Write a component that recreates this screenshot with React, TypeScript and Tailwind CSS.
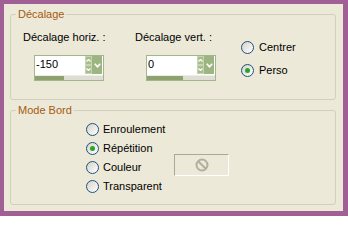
import type { ReactNode } from 'react'

function Group({ title, className, children }: { title: string; className: string; children: ReactNode }) {
  return (
    <div className={`relative w-[326px] border border-[#D0D0BF] rounded-[3px] ${className}`}>
      <span className="absolute left-[5px] -top-[7px] px-[2px] bg-[#ECE9D8] text-[#A65A10]">{title}</span>
      {children}
    </div>
  )
}

function Radio({ checked, label, gap }: { checked?: boolean; label: string; gap: string }) {
  return (
    <div className="flex items-center h-[13px]">
      <span className="w-[13px] h-[13px] rounded-full border border-[#1C5180] bg-gradient-to-br from-[#D6D3C6] to-white flex items-center justify-center shrink-0">
        {checked && <span className="w-[5px] h-[5px] rounded-full bg-[#2BA52B]" />}
      </span>
      <span className={gap}>{label}</span>
    </div>
  )
}

function SpinBox({ value, fill }: { value: string; fill: string }) {
  return (
    <div className="w-[70px] h-[26px] border border-[#A3B88A] bg-white flex flex-col">
      <div className="flex h-[19px] items-start">
        <div className="flex-1 pl-[1px] leading-[17px]">{value}</div>
        <div className="flex flex-col w-[7px]">
          <div className="h-[9px] bg-[#A7BD8B] border border-[#C6D4B2] flex items-center justify-center">
            <svg width="5" height="3" viewBox="0 0 5 3"><path d="M0.5 2.5 L2.5 0.5 L4.5 2.5" stroke="white" strokeWidth="1.2" fill="none" /></svg>
          </div>
          <div className="h-[9px] bg-[#A7BD8B] border border-[#C6D4B2] flex items-center justify-center">
            <svg width="5" height="3" viewBox="0 0 5 3"><path d="M0.5 0.5 L2.5 2.5 L4.5 0.5" stroke="white" strokeWidth="1.2" fill="none" /></svg>
          </div>
        </div>
        <div className="w-[10px] h-[18px] mr-[1px] bg-[#9DB583] flex items-center justify-center">
          <svg width="7" height="5" viewBox="0 0 7 5"><path d="M0.8 0.8 L3.5 3.8 L6.2 0.8" stroke="white" strokeWidth="1.6" fill="none" /></svg>
        </div>
      </div>
      <div className="h-[5px] bg-[#DEDED2] border-t border-[#EDEDE4]">
        <div className={`h-full bg-[#8DA26F] ${fill}`} />
      </div>
    </div>
  )
}

export default function App() {
  return (
    <div className="w-[348px] h-[216px] bg-[#A05F95] pt-[4px] pl-[4px] pr-[5px] pb-[5px] font-['Liberation_Sans',Arial,sans-serif] text-[11px] leading-[13px] text-black">
      <div className="h-full bg-[#ECE9D8] pt-[10px] pl-[6px]">
        {/* Décalage */}
        <Group title="Décalage" className="h-[86px]">
          <div className="flex pt-[16px] pl-[12px]">
            <div className="w-[112px] flex flex-col">
              <span>Décalage horiz. :</span>
              <div className="ml-[11px] mt-[11px]">
                <SpinBox value="-150" fill="w-[29px]" />
              </div>
            </div>
            <div className="w-[106px] flex flex-col">
              <span>Décalage vert. :</span>
              <div className="ml-[11px] mt-[11px]">
                <SpinBox value="0" fill="w-[36px]" />
              </div>
            </div>
            <div className="flex flex-col gap-[10px] mt-[10px]">
              <Radio label="Centrer" gap="ml-[5px]" />
              <Radio label="Perso" checked gap="ml-[5px]" />
            </div>
          </div>
        </Group>

        {/* Mode Bord */}
        <Group title="Mode Bord" className="h-[95px] mt-[10px]">
          <div className="flex flex-col gap-[6px] pt-[12px] pl-[75px]">
            <Radio label="Enroulement" gap="ml-[4px]" />
            <Radio label="Répétition" checked gap="ml-[4px]" />
            <div className="flex items-center h-[13px]">
              <Radio label="Couleur" gap="ml-[4px] w-[71px]" />
              <div className="w-[55px] h-[22px] mb-[5px] border-t border-l border-[#ACA899] border-b border-r border-b-white border-r-white flex items-center justify-center">
                <svg width="14" height="14" viewBox="0 0 14 14">
                  <circle cx="7" cy="7" r="5.5" stroke="#B3AF9F" strokeWidth="2" fill="none" />
                  <path d="M3.2 3.2 L10.8 10.8" stroke="#B3AF9F" strokeWidth="2" />
                </svg>
              </div>
            </div>
            <Radio label="Transparent" gap="ml-[4px]" />
          </div>
        </Group>
      </div>
    </div>
  )
}
